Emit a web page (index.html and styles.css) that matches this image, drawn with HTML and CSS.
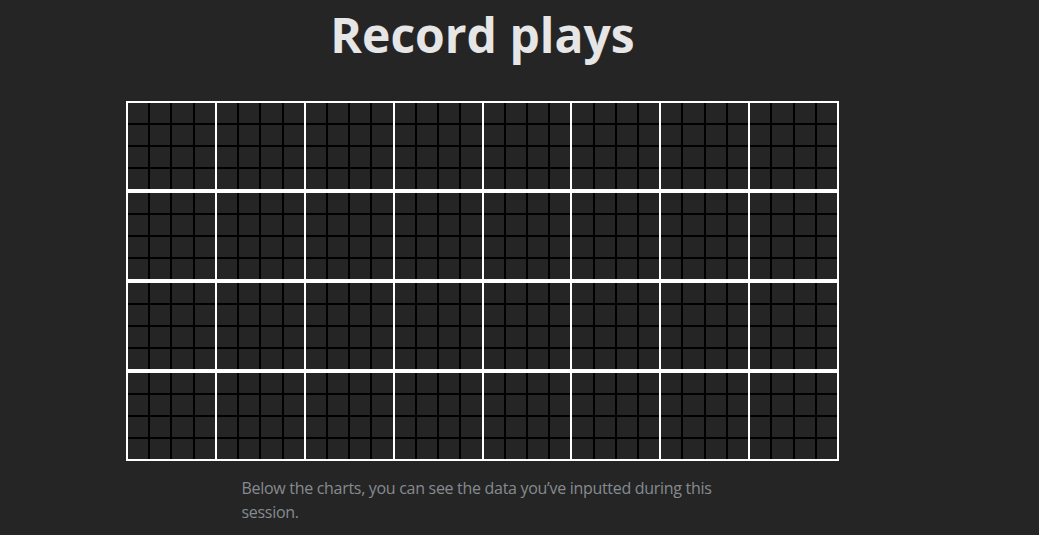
FILE: index.html
```html
<!DOCTYPE html>
<html lang="en">
<head>
<meta charset="utf-8">
<title>Record plays</title>
<link rel="stylesheet" href="styles.css">
</head>
<body>
<main class="page">
  <h1 class="title">Record plays</h1>
  <div class="staff" id="staff"></div>
  <p class="note">Below the charts, you can see the data you’ve inputted during this session.</p>
</main>
<script src="app.js"></script>
</body>
</html>
```
FILE: styles.css
```css
html, body {
  margin: 0;
  padding: 0;
  background: #252525;
}
body {
  font-family: "Open Sans", "Noto Sans", sans-serif;
  width: 1039px;
  height: 535px;
  overflow: hidden;
}
.page {
  width: 965px;
  display: flex;
  flex-direction: column;
  align-items: center;
}
.title {
  margin: 0;
  padding-top: 6px;
  font-size: 48px;
  line-height: 58px;
  font-weight: 700;
  color: #e6e6e6;
}
.staff {
  margin-top: 37px;
  width: 713px;
  display: flex;
  flex-direction: column;
}
.row {
  display: grid;
  grid-template-columns: repeat(8, 1fr);
  border-top: 2px solid #fff;
  border-bottom: 2px solid #fff;
  border-right: 2px solid #fff;
}
.block {
  border-left: 2px solid #fff;
  display: grid;
  grid-template-columns: repeat(4, 1fr);
  grid-template-rows: repeat(4, 20px);
  gap: 2px;
  background: #000;
}
.cell {
  background: #252525;
}
.note {
  width: 482px;
  margin: 15px 0 0;
  font-size: 16px;
  line-height: 24px;
  letter-spacing: -0.3px;
  color: #858b90;
}
```
FILE: app.js
```js
const staff = document.getElementById('staff');
for (let r = 0; r < 4; r++) {
  const row = document.createElement('div');
  row.className = 'row';
  for (let b = 0; b < 8; b++) {
    const block = document.createElement('div');
    block.className = 'block';
    for (let c = 0; c < 16; c++) {
      const cell = document.createElement('div');
      cell.className = 'cell';
      block.appendChild(cell);
    }
    row.appendChild(block);
  }
  staff.appendChild(row);
}
```
